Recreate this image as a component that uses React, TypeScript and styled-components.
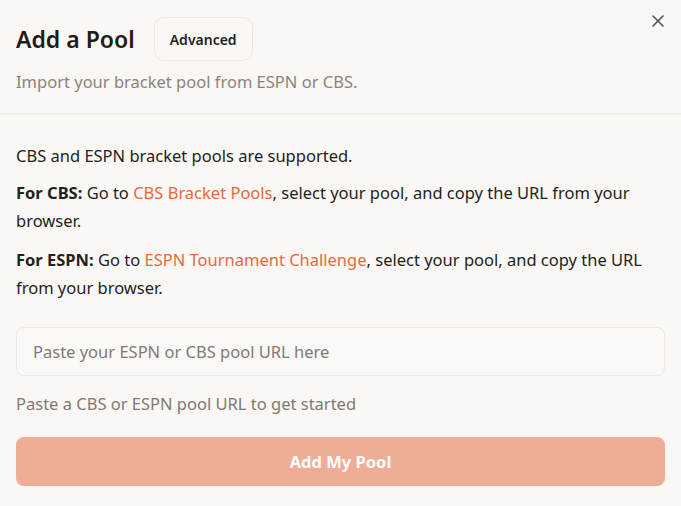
import React from "react";
import styled, { createGlobalStyle } from "styled-components";

const Global = createGlobalStyle`
  html, body { margin: 0; padding: 0; background: #faf7f4; }
  body { font-family: "Noto Sans", "Open Sans", sans-serif; color: #231f1c; }
  * { box-sizing: border-box; }
`;

const Dialog = styled.div`
  position: relative;
  width: 681px;
  height: 506px;
  background: #faf7f4;
`;

const Header = styled.header`
  padding: 17px 16px 19px;
  border-bottom: 2px solid #efebe7;
`;

const TitleRow = styled.div`
  display: flex;
  align-items: center;
  gap: 19px;
`;

const Title = styled.h2`
  margin: 0;
  font-size: 23px;
  font-weight: 600;
  line-height: 32px;
  color: #1f1b18;
`;

const ModeButton = styled.button`
  height: 44px;
  padding: 0 15px;
  border: 1px solid #ece7e2;
  border-radius: 10px;
  background: #faf7f4;
  font-family: inherit;
  font-size: 14px;
  font-weight: 600;
  color: #231f1c;
`;

const Subtitle = styled.p`
  margin: 9px 0 0;
  font-size: 16.5px;
  line-height: 24px;
  color: #8a847f;
`;

const Close = styled.button`
  position: absolute;
  top: 12px;
  right: 14px;
  width: 18px;
  height: 18px;
  padding: 0;
  border: 0;
  background: transparent;
  color: #555150;
  display: flex;
  align-items: center;
  justify-content: center;
`;

const Body = styled.div`
  padding: 27px 16px 0;
  display: flex;
  flex-direction: column;
`;

const Para = styled.p<{ $gap?: number }>`
  margin: 0 0 ${(p) => p.$gap ?? 8}px;
  font-size: 16.5px;
  line-height: 28.5px;
  color: #231f1c;
`;

const Strong = styled.strong`
  font-weight: 700;
`;

const Link = styled.a`
  color: #e8693f;
  text-decoration: none;
`;

const Input = styled.input`
  margin-top: 16px;
  height: 49px;
  width: 100%;
  padding: 0 16px;
  border: 1px solid #ece7e2;
  border-radius: 8px;
  background: #fbf9f7;
  font-family: inherit;
  font-size: 16.5px;
  color: #231f1c;
  outline: none;
  &::placeholder { color: #7f7a76; }
`;

const Hint = styled.p`
  margin: 16px 0 0;
  font-size: 16.5px;
  line-height: 24px;
  color: #7f7a76;
`;

const Submit = styled.button`
  margin-top: 21px;
  height: 49px;
  width: 100%;
  border: 0;
  border-radius: 8px;
  background: #f0ad96;
  color: #ffffff;
  font-family: inherit;
  font-size: 16.5px;
  font-weight: 700;
`;

export default function App() {
  return (
    <>
      <Global />
      <Dialog>
        <Header>
          <TitleRow>
            <Title>Add a Pool</Title>
            <ModeButton>Advanced</ModeButton>
          </TitleRow>
          <Subtitle>Import your bracket pool from ESPN or CBS.</Subtitle>
        </Header>
        <Close aria-label="Close">
          <svg width="14" height="14" viewBox="0 0 14 14" fill="none" stroke="currentColor" strokeWidth="1.6" strokeLinecap="round">
            <path d="M2 2 L12 12 M12 2 L2 12" />
          </svg>
        </Close>
        <Body>
          <Para>CBS and ESPN bracket pools are supported.</Para>
          <Para $gap={10}>
            <Strong>For CBS:</Strong> Go to <Link href="#">CBS Bracket Pools</Link>, select your pool, and copy the URL from your browser.
          </Para>
          <Para>
            <Strong>For ESPN:</Strong> Go to <Link href="#">ESPN Tournament Challenge</Link>, select your pool, and copy the URL from your browser.
          </Para>
          <Input placeholder="Paste your ESPN or CBS pool URL here" />
          <Hint>Paste a CBS or ESPN pool URL to get started</Hint>
          <Submit>Add My Pool</Submit>
        </Body>
      </Dialog>
    </>
  );
}
